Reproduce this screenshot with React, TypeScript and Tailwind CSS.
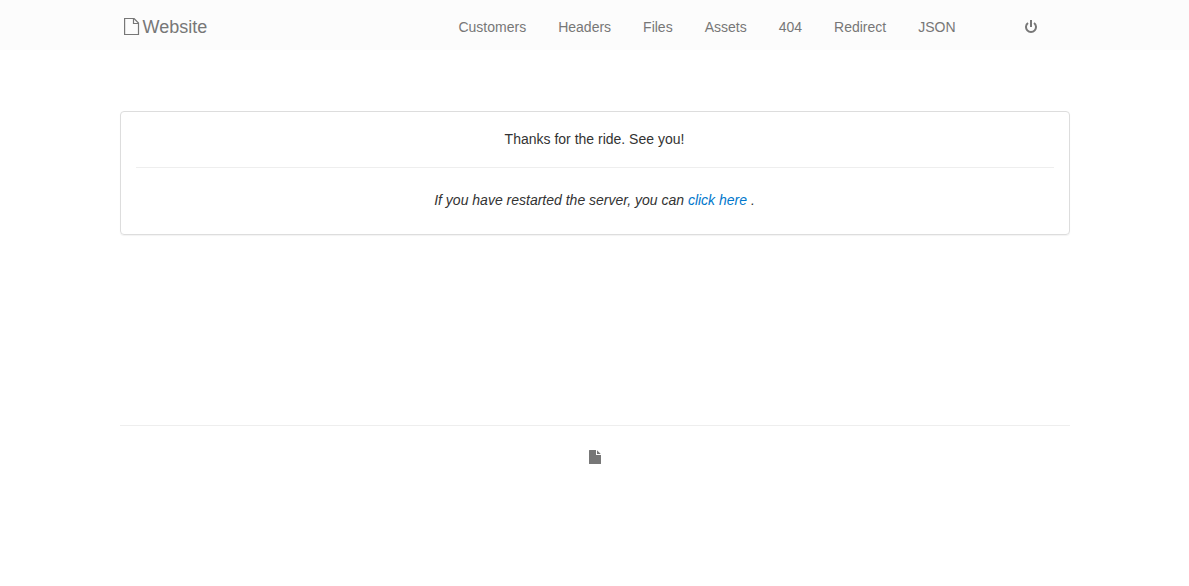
const links = ["Customers", "Headers", "Files", "Assets", "404", "Redirect", "JSON"];

function FileOutline() {
  return (
    <svg className="mb-0.5 h-[17px] w-4" viewBox="0 0 16 17" fill="none" stroke="currentColor" strokeWidth="1.2" aria-hidden="true">
      <path d="M.6.5h9.400l4.500 4.500v11.500H.6z" />
      <path d="M9.500.5v5h5" />
    </svg>
  );
}

function FileSolid() {
  return (
    <svg className="h-3.5 w-3" viewBox="0 0 12 14" fill="currentColor" aria-hidden="true">
      <path d="M0 .5Q0 0 .5 0H7v5h5v8.500q0 .5-.5.5H.5Q0 14 0 13.500zM8 .2L11.800 4H8z" />
    </svg>
  );
}

function PowerIcon() {
  return (
    <svg className="h-3.5 w-3" viewBox="0 0 12 14" fill="none" stroke="currentColor" strokeWidth="2" aria-hidden="true">
      <path d="M6 0v7" />
      <path d="M3 3a5 5 0 1 0 6 0" />
    </svg>
  );
}

export default function App() {
  return (
    <div className="bg-white font-['Liberation_Sans',Arial,sans-serif] text-sm leading-5 text-[#333]">
      <header className="bg-[#fcfcfc] text-[#777]">
        <nav className="mx-auto flex h-[50px] w-full max-w-[950px] items-center justify-between pt-1">
          <a href="#" className="flex items-center gap-[3px] pl-1 text-lg leading-5">
            <FileOutline />
            Website
          </a>
          <div className="flex items-center pr-[33px]">
            <ul className="flex gap-8">
              {links.map((label) => (
                <li key={label}>
                  <a href="#">{label}</a>
                </li>
              ))}
            </ul>
            <a href="#" aria-label="Log out" className="ml-[69px]">
              <PowerIcon />
            </a>
          </div>
        </nav>
      </header>
      <div className="mx-auto w-full max-w-[950px]">
        <main className="mt-[61px] rounded border border-[#ddd] px-[15px] pt-[17px] pb-6 text-center shadow-[0_1px_1px_rgba(0,0,0,0.05)]">
          <p>Thanks for the ride. See you!</p>
          <hr className="mt-[18px] mb-[22px] border-[#eee]" />
          <p className="italic">
            If you have restarted the server, you can{" "}
            <a href="#" className="text-[#0077cc]">click here</a> .
          </p>
        </main>
        <footer className="mt-[190px] flex justify-center border-t border-[#eee] pt-6 text-[#777]">
          <FileSolid />
        </footer>
      </div>
    </div>
  );
}
